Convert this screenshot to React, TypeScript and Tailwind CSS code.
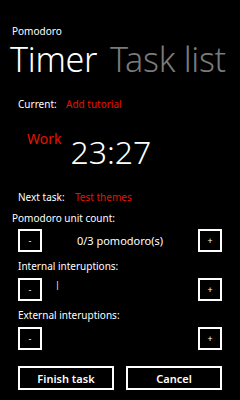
export default function App() {
  const font = { fontFamily: '"Noto Sans", "Open Sans", sans-serif' };

  const Box = ({ label }: { label: string }) => (
    <div className="w-[24px] h-[23px] border-2 border-white flex items-center justify-center text-[9px] leading-none">
      {label}
    </div>
  );

  return (
    <div
      className="w-[240px] h-[400px] bg-black text-white overflow-hidden flex flex-col"
      style={font}
    >
      {/* Header */}
      <div className="pt-[25px] pl-[12px] text-[10px] leading-[12px]">Pomodoro</div>
      <div className="mt-[2px] pl-[10px] flex gap-[13px] text-[34px] leading-[40px] font-light tracking-[-0.3px]">
        <span>Timer</span>
        <span className="text-[#7a7a7a]">Task list</span>
      </div>

      {/* Current task */}
      <div className="mt-[19px] pl-[18px] flex text-[10px] leading-[12px]">
        <span className="w-[48px]">Current:</span>
        <span className="text-[#e51400]">Add tutorial</span>
      </div>

      {/* Timer */}
      <div className="mt-[25px] pl-[27px] flex items-start">
        <span className="mt-[-3px] text-[14px] leading-[14px] text-[#e51400]">Work</span>
        <span className="ml-[9px] text-[32px] leading-[34px] font-light">23:27</span>
      </div>

      {/* Next task */}
      <div className="mt-[22px] pl-[18px] flex text-[10px] leading-[12px]">
        <span className="w-[57px]">Next task:</span>
        <span className="text-[#e51400]">Test themes</span>
      </div>

      {/* Pomodoro count */}
      <div className="mt-[9px] pl-[12px] text-[10px] leading-[12px]">Pomodoro unit count:</div>
      <div className="mt-[5px] px-[18px] flex items-center">
        <Box label="-" />
        <span className="flex-1 text-center text-[11px] leading-[14px]">0/3 pomodoro(s)</span>
        <Box label="+" />
      </div>

      {/* Internal */}
      <div className="mt-[8px] pl-[18px] text-[10px] leading-[12px]">Internal interuptions:</div>
      <div className="mt-[6px] px-[18px] flex items-start">
        <Box label="-" />
        <span className="flex-1 pl-[13px] pt-[2px] text-[9px] leading-[10px]">|</span>
        <Box label="+" />
      </div>

      {/* External */}
      <div className="mt-[8px] pl-[18px] text-[10px] leading-[12px]">External interuptions:</div>
      <div className="mt-[6px] px-[18px] flex items-center justify-between">
        <Box label="-" />
        <Box label="+" />
      </div>

      {/* Actions */}
      <div className="mt-[16px] px-[18px] flex gap-[12px]">
        <button className="flex-1 h-[24px] border-2 border-white text-[11px] font-semibold leading-none">
          Finish task
        </button>
        <button className="flex-1 h-[24px] border-2 border-white text-[11px] font-semibold leading-none">
          Cancel
        </button>
      </div>
    </div>
  );
}
